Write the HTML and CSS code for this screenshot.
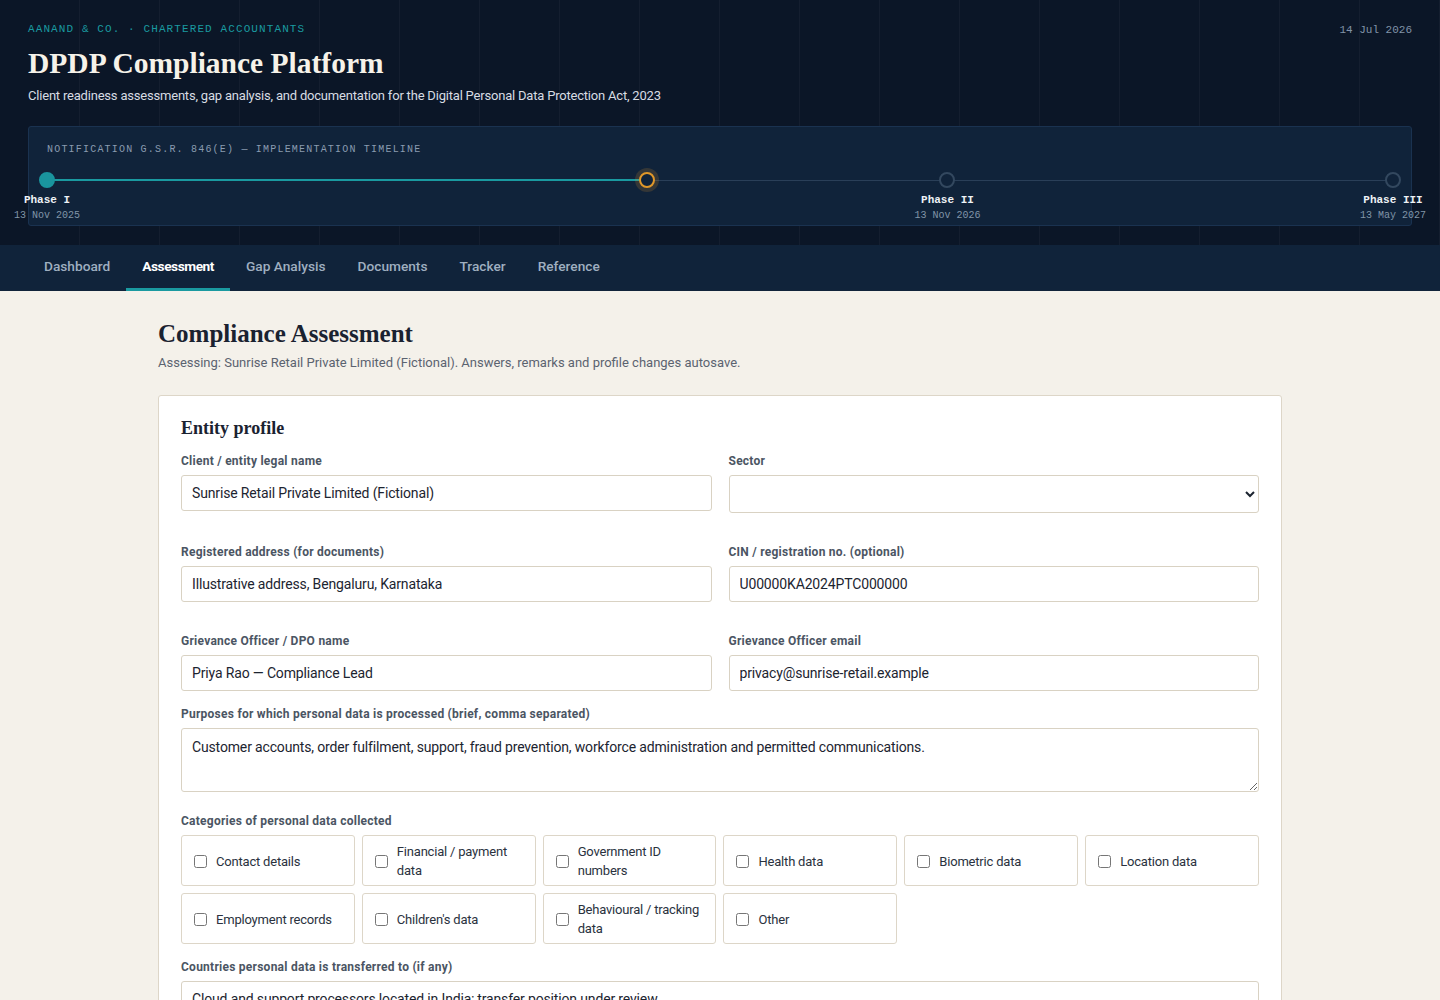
FILE: index.html
```html
<!DOCTYPE html>
<html lang="en">
<head>
  <meta charset="UTF-8" />
  <meta name="viewport" content="width=device-width, initial-scale=1.0" />
  <title>DPDP Compliance Platform</title>
  <link rel="stylesheet" href="styles.css">
</head>
<body>
  <header class="masthead">
    <div class="masthead-top">
      <div>
        <div class="firm">AANAND &amp; CO. · CHARTERED ACCOUNTANTS</div>
        <h1>DPDP Compliance Platform</h1>
        <p class="tagline">Client readiness assessments, gap analysis, and documentation for the Digital Personal Data Protection Act, 2023</p>
      </div>
      <div class="today">14 Jul 2026</div>
    </div>

    <!-- Implementation timeline -->
    <section class="timeline">
      <div class="tl-title">NOTIFICATION G.S.R. 846(E) — IMPLEMENTATION TIMELINE</div>
      <div class="tl-track">
        <div class="tl-line"></div>
        <div class="tl-progress" style="width: 44.6%;"></div>
        <div class="tl-point done" style="left: 0%;">
          <span class="dot"></span>
          <span class="tl-name">Phase I</span>
          <span class="tl-date">13 Nov 2025</span>
        </div>
        <div class="tl-point now" style="left: 44.6%;">
          <span class="dot"></span>
        </div>
        <div class="tl-point" style="left: 66.9%;">
          <span class="dot"></span>
          <span class="tl-name">Phase II</span>
          <span class="tl-date">13 Nov 2026</span>
        </div>
        <div class="tl-point" style="left: 100%;">
          <span class="dot"></span>
          <span class="tl-name">Phase III</span>
          <span class="tl-date">13 May 2027</span>
        </div>
      </div>
    </section>
  </header>

  <nav class="tabs">
    <a href="#">Dashboard</a>
    <a href="#" class="active">Assessment</a>
    <a href="#">Gap Analysis</a>
    <a href="#">Documents</a>
    <a href="#">Tracker</a>
    <a href="#">Reference</a>
  </nav>

  <main class="page">
    <h2>Compliance Assessment</h2>
    <p class="lead">Assessing: Sunrise Retail Private Limited (Fictional). Answers, remarks and profile changes autosave.</p>

    <section class="card">
      <h3>Entity profile</h3>

      <div class="field-grid">
        <div class="field">
          <label>Client / entity legal name</label>
          <input type="text" value="Sunrise Retail Private Limited (Fictional)" />
        </div>
        <div class="field">
          <label>Sector</label>
          <select><option></option></select>
        </div>
        <div class="field">
          <label>Registered address (for documents)</label>
          <input type="text" value="Illustrative address, Bengaluru, Karnataka" />
        </div>
        <div class="field">
          <label>CIN / registration no. (optional)</label>
          <input type="text" value="U00000KA2024PTC000000" />
        </div>
        <div class="field">
          <label>Grievance Officer / DPO name</label>
          <input type="text" value="Priya Rao — Compliance Lead" />
        </div>
        <div class="field">
          <label>Grievance Officer email</label>
          <input type="text" value="privacy@sunrise-retail.example" />
        </div>
      </div>

      <div class="field wide">
        <label>Purposes for which personal data is processed (brief, comma separated)</label>
        <textarea rows="2">Customer accounts, order fulfilment, support, fraud prevention, workforce administration and permitted communications.</textarea>
      </div>

      <div class="field">
        <label>Categories of personal data collected</label>
        <div class="check-grid">
          <label class="check"><input type="checkbox" /><span>Contact details</span></label>
          <label class="check"><input type="checkbox" /><span>Financial / payment data</span></label>
          <label class="check"><input type="checkbox" /><span>Government ID numbers</span></label>
          <label class="check"><input type="checkbox" /><span>Health data</span></label>
          <label class="check"><input type="checkbox" /><span>Biometric data</span></label>
          <label class="check"><input type="checkbox" /><span>Location data</span></label>
          <label class="check"><input type="checkbox" /><span>Employment records</span></label>
          <label class="check"><input type="checkbox" /><span>Children's data</span></label>
          <label class="check"><input type="checkbox" /><span>Behavioural / tracking data</span></label>
          <label class="check"><input type="checkbox" /><span>Other</span></label>
        </div>
      </div>

      <div class="field">
        <label>Countries personal data is transferred to (if any)</label>
        <input type="text" value="Cloud and support processors located in India; transfer position under review." />
      </div>
    </section>
  </main>
</body>
</html>
```

FILE: styles.css
```css
body {
  margin: 0;
  font-family: Roboto, 'Liberation Sans', sans-serif;
  background: #f4f1ea;
  color: #1c2430;
}
/* Header */
.masthead {
  background-color: #0b1627;
  background-image: linear-gradient(to right, transparent 79px, rgba(255, 255, 255, 0.035) 79px, rgba(255, 255, 255, 0.035) 80px);
  background-size: 80px 100%;
  padding: 22px 28px 19px;
  color: #f1ede4;
}
.masthead-top {
  display: flex;
  justify-content: space-between;
  align-items: flex-start;
}
.firm {
  font-family: 'Liberation Mono', monospace;
  font-size: 11px;
  line-height: 14px;
  letter-spacing: 0.1em;
  color: #1a9aa0;
}
.masthead h1 {
  font-family: 'Liberation Serif', serif;
  font-size: 29.5px;
  line-height: 36px;
  margin: 9px 0 0;
  color: #f6f2e9;
}
.tagline {
  margin: 6px 0 0;
  font-size: 13px;
  line-height: 18px;
  letter-spacing: -0.2px;
  color: #d7dce3;
}
.today {
  font-family: 'Liberation Mono', monospace;
  font-size: 11px;
  line-height: 16px;
  color: #8193a8;
}
/* Timeline */
.timeline {
  margin-top: 21px;
  background: #10233a;
  border: 1px solid #1a3250;
  border-radius: 3px;
  padding: 16px 18px 3px;
}
.tl-title {
  font-family: 'Liberation Mono', monospace;
  font-size: 10px;
  line-height: 14px;
  letter-spacing: 0.12em;
  color: #8a9bb0;
}
.tl-track {
  position: relative;
  height: 50px;
  margin-top: 15px;
}
.tl-line {
  position: absolute;
  left: 0;
  right: 0;
  top: 8px;
  height: 1px;
  background: #2a3f58;
}
.tl-progress {
  position: absolute;
  left: 0;
  top: 7px;
  height: 2px;
  background: #1a9aa0;
}
.tl-point {
  position: absolute;
  top: 0;
  transform: translateX(-50%);
  display: flex;
  flex-direction: column;
  align-items: center;
  font-family: 'Liberation Mono', monospace;
  white-space: nowrap;
}
.tl-point .dot {
  width: 12px;
  height: 12px;
  border: 2px solid #33485f;
  border-radius: 50%;
  background: #10233a;
}
.tl-point.done .dot {
  background: #1a959e;
  border-color: #1a959e;
}
.tl-point.now .dot {
  border-color: #e0982a;
  box-shadow: 0 0 0 4px rgba(224, 152, 42, 0.18);
}
.tl-name {
  margin-top: 5px;
  font-size: 11px;
  line-height: 15px;
  font-weight: bold;
  color: #eef2f6;
}
.tl-date {
  font-size: 10px;
  line-height: 15px;
  color: #8195a8;
}
/* Tabs */
.tabs {
  display: flex;
  background: #10233a;
  padding: 0 28px;
  height: 46px;
}
.tabs a {
  display: block;
  padding: 0 16px;
  line-height: 43px;
  border-bottom: 3px solid transparent;
  font-size: 13.7px;
  font-weight: 500;
  color: #9fafc0;
  text-decoration: none;
}
.tabs a.active {
  color: #ffffff;
  font-weight: 700;
  letter-spacing: -0.45px;
  border-bottom-color: #1a9aa0;
}
/* Page */
.page {
  width: 1124px;
  margin: 0 auto;
  padding-top: 28px;
}
.page h2 {
  font-family: 'Liberation Serif', serif;
  font-size: 25px;
  line-height: 30px;
  margin: 0;
  color: #1a2230;
}
.lead {
  margin: 5px 0 0;
  font-size: 13px;
  line-height: 18px;
  color: #5b6370;
}
.card {
  margin-top: 23px;
  background: #fff;
  border: 1px solid #ddd6c8;
  border-radius: 3px;
  padding: 21px 22px;
}
.card h3 {
  font-family: 'Liberation Serif', serif;
  font-size: 18px;
  line-height: 22px;
  margin: 0 0 15px;
  color: #1a2230;
}
.field-grid {
  display: grid;
  grid-template-columns: 1fr 1fr;
  column-gap: 17px;
  row-gap: 16px;
}
.field {
  display: flex;
  flex-direction: column;
  margin-bottom: 16px;
}
.field.wide {
  margin-bottom: 22px;
}
.field > label {
  font-size: 12px;
  line-height: 15px;
  font-weight: 700;
  letter-spacing: 0.25px;
  color: #4b5563;
  margin-bottom: 6px;
}
.field input[type="text"],
.field select,
.field textarea {
  font-family: Roboto, 'Liberation Sans', sans-serif;
  font-size: 14px;
  letter-spacing: -0.15px;
  color: #1c2430;
  border: 1px solid #d9d2c3;
  border-radius: 3px;
  background: #fff;
  padding: 0 10px;
  height: 36px;
  box-sizing: border-box;
}
.field select {
  height: 38px;
}
.field textarea {
  height: 64px;
  padding: 9px 10px;
  line-height: 18px;
  resize: vertical;
}
/* Checkbox grid */
.check-grid {
  display: grid;
  grid-template-columns: repeat(6, 1fr);
  gap: 7px;
}
.check {
  display: flex;
  align-items: center;
  gap: 9px;
  padding: 6px 12px 5px;
  min-height: 38px;
  border: 1px solid #ddd6c8;
  border-radius: 3px;
  font-size: 13px;
  line-height: 19px;
  letter-spacing: -0.2px;
  color: #2a323e;
}
.check input {
  margin: 0;
  width: 13px;
  height: 13px;
  flex-shrink: 0;
}
```
